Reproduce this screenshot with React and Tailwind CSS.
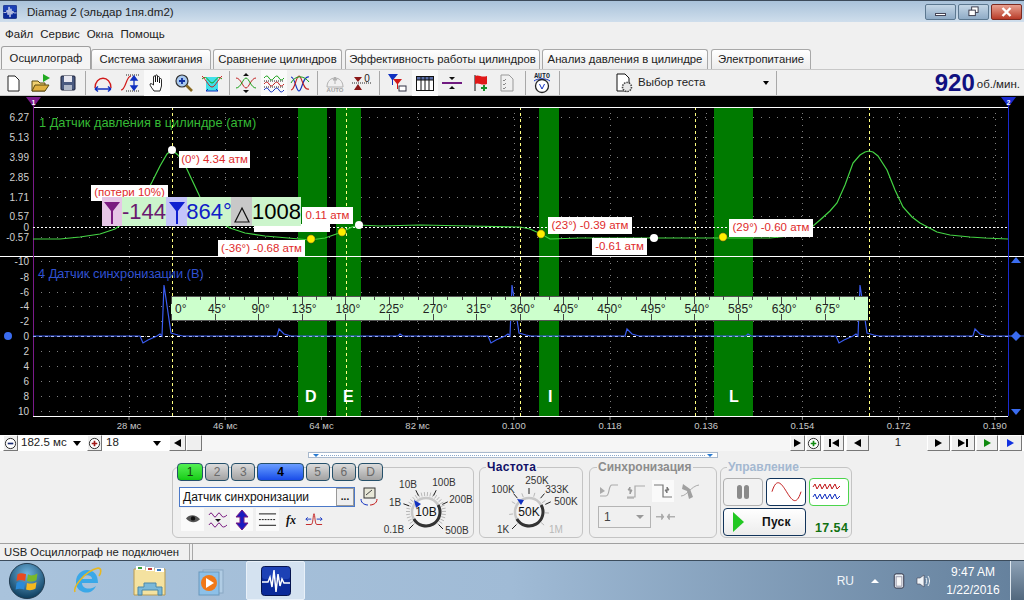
import React from "react";

const SANS = "font-['Liberation_Sans',Arial,sans-serif]";

// sync trace repeats every 348px
const syncPeriod = (o) =>
  `L${140 + o} 336 L${143 + o} 343 L${148 + o} 340 L${157 + o} 336 L${160 + o} 334 L${162 + o} 336 L${164 + o} 285 L${171 + o} 333 L${178 + o} 335 L${183 + o} 336 L${277 + o} 336 L${279 + o} 329 L${284 + o} 334 L${291 + o} 336 L${398 + o} 336 L${400 + o} 334 L${403 + o} 336 `;

const syncPath = "M33 336 " + syncPeriod(0) + syncPeriod(348) + syncPeriod(696) + "L1008 336";

const pressurePoints =
  "33,239 60,239 80,237 100,234 115,229 125,222 135,212 145,195 152,182 160,166 167,154 172,150 178,155 185,165 192,180 200,197 208,210 218,221 230,228 245,233 265,236 288,238 310,240 325,238 342,232 352,227 359,225 380,226 420,225 470,226 520,227 530,229 541,234 550,239 580,238 654,238 723,238 770,238 790,236 800,233 813,226 820,220 830,211 837,203 845,185 853,163 860,155 865,152 869,151 873,152 878,156 887,170 895,190 903,207 912,217 920,223 937,232 950,235 970,237 985,238 1008,239";

const topTicks = [
  ["6.27", 117], ["5.13", 137], ["3.99", 157], ["2.85", 177], ["1.71", 197],
  ["0.57", 216.5], ["0", 227], ["-0.57", 237],
];
const bottomTicks = [
  ["-10", 261], ["-8", 277], ["-6", 292], ["-4", 306], ["-2", 321], ["0", 336],
  ["2", 351], ["4", 366], ["6", 381], ["8", 396], ["10", 411],
];
const timeTicks = ["28 мс", "46 мс", "64 мс", "82 мс", "0.100", "0.118", "0.136", "0.154", "0.172", "0.190"];
const degrees = [45, 90, 135, 180, 225, 270, 315, 360, 405, 450, 495, 540, 585, 630, 675];

function WaveLogo({ className }) {
  return (
    <svg viewBox="0 0 30 30" className={className}>
      <rect x="0.5" y="0.5" width="29" height="29" rx="3" fill="#0b2a9a" stroke="#06144f" />
      <rect x="1" y="1" width="28" height="12" rx="3" fill="#2a52c8" opacity="0.6" />
      <path d="M1 16 H7 L9 11 L11 21 L13 4 L15 26 L17 8 L19 20 L21 13 L23 17 H29" fill="none" stroke="#fff" strokeWidth="1.5" />
    </svg>
  );
}

function PlotArea() {
  return (
    <div className="relative h-[339px] w-full shrink-0 overflow-hidden bg-black">
      <svg viewBox="0 96 1024 339" className="absolute inset-0 h-[339px] w-[1024px]">
        {topTicks.concat(bottomTicks).map(([t, y]) => (
          <line key={t + y} x1="33" x2="1008" y1={Math.floor(y) + 0.5} y2={Math.floor(y) + 0.5} stroke="#808080" strokeDasharray="1 7" />
        ))}
        {timeTicks.map((t, i) => (
          <line key={t} x1={Math.round(129 + i * 96.2) + 0.5} x2={Math.round(129 + i * 96.2) + 0.5} y1="107" y2="416" stroke="#808080" strokeDasharray="1 5" />
        ))}
        <rect x="298" y="107" width="29" height="309" fill="#007a00" />
        <rect x="336" y="107" width="25" height="309" fill="#007a00" />
        <rect x="539" y="107" width="20" height="309" fill="#007a00" />
        <rect x="714" y="107" width="39" height="309" fill="#007a00" />
        {[172.5, 346.5, 520.5, 695.5, 869.5].map((x) => (
          <line key={x} x1={x} x2={x} y1="107" y2="416" stroke="#ffff80" strokeDasharray="3 3" />
        ))}
        <line x1="33" x2="1008" y1="107.5" y2="107.5" stroke="#fff" />
        <line x1="0" x2="1024" y1="256.5" y2="256.5" stroke="#fff" />
        <line x1="33" x2="1008" y1="416.5" y2="416.5" stroke="#fff" />
        <line x1="33.5" x2="33.5" y1="100" y2="416" stroke="#7a1a8a" />
        <line x1="1008.5" x2="1008.5" y1="100" y2="416" stroke="#1a2ad0" />
        <line x1="33" x2="1008" y1="227.5" y2="227.5" stroke="#fff" strokeDasharray="2 2" />
        <polyline points={pressurePoints} fill="none" stroke="#44d444" strokeWidth="1.2" />
        <line x1="33" x2="1008" y1="336.5" y2="336.5" stroke="#fff" strokeDasharray="3 3" />
        <path d={syncPath} fill="none" stroke="#3a5cf0" strokeWidth="1.2" />
        <path d="M26 97 H41 L33.5 107 Z" fill="#7a1a8a" />
        <text x="33.5" y="105" fontSize="7" fontWeight="700" fill="#fff" textAnchor="middle" fontFamily="Liberation Sans">1</text>
        <path d="M1001 97 H1016 L1008.5 107 Z" fill="#1a2ad0" />
        <text x="1008.5" y="105" fontSize="7" fontWeight="700" fill="#fff" textAnchor="middle" fontFamily="Liberation Sans">2</text>
        <circle cx="8" cy="336" r="4" fill="#3a6cf0" />
        <path d="M1016 331 L1021 336 L1016 341 L1011 336 Z" fill="#3a6cf0" />
        <path d="M1011 263 L1016 257 L1021 263 Z" fill="#3a6cf0" />
        <path d="M1011 409 L1021 409 L1016 415 Z" fill="#3a6cf0" />
        {topTicks.concat(bottomTicks).map(([t, y]) => (
          <text key={t + y} x="29" y={y + 3.5} fontSize="10" fill="#d0d0d0" textAnchor="end" fontFamily="Liberation Sans">{t}</text>
        ))}
        {timeTicks.map((t, i) => (
          <g key={t}>
            <line x1={129 + i * 96.2} x2={129 + i * 96.2} y1="417" y2="420" stroke="#999" />
            <text x={129 + i * 96.2} y="429" fontSize="9.5" fill="#c8c8c8" textAnchor="middle" fontFamily="Liberation Sans">{t}</text>
          </g>
        ))}
        <circle cx="172" cy="150" r="4" fill="#fff" />
        <circle cx="359" cy="225" r="4" fill="#fff" />
        <circle cx="654" cy="238" r="4" fill="#fff" />
        <circle cx="311" cy="239" r="4.2" fill="#ffee00" stroke="#222" strokeWidth="0.5" />
        <circle cx="342" cy="232" r="4.2" fill="#ffee00" stroke="#222" strokeWidth="0.5" />
        <circle cx="541" cy="234" r="4.2" fill="#ffee00" stroke="#222" strokeWidth="0.5" />
        <circle cx="723" cy="237" r="4.2" fill="#ffee00" stroke="#222" strokeWidth="0.5" />
      </svg>

      <span className="absolute left-[39px] top-[21px] text-[12.8px] leading-none text-[#35bb35]">1 Датчик давления в цилиндре (атм)</span>
      <span className="absolute left-[38px] top-[172px] text-[12.8px] leading-none text-[#2f50d0]">4 Датчик синхронизации (В)</span>

      {/* band letters */}
      <span className="absolute left-[305px] top-[293px] text-[16px] font-bold leading-none text-white">D</span>
      <span className="absolute left-[343px] top-[293px] text-[16px] font-bold leading-none text-white">E</span>
      <span className="absolute left-[548px] top-[293px] text-[16px] font-bold leading-none text-white">I</span>
      <span className="absolute left-[729px] top-[293px] text-[16px] font-bold leading-none text-white">L</span>

      {/* red value labels */}
      <span className="absolute left-[254px] top-[128px] h-[8px] w-[76px] bg-white" />
      <span className="absolute left-[179px] top-[55px] flex h-[17px] w-[71px] items-center justify-center bg-white text-[11.5px] text-[#e02a2a]">(0°) 4.34 атм</span>
      <span className="absolute left-[91px] top-[89px] flex h-[16px] w-[77px] items-center justify-center bg-white text-[11.5px] text-[#e02a2a]">(потери 10%)</span>
      <span className="absolute left-[302px] top-[111px] flex h-[17px] w-[51px] items-center justify-center bg-white text-[11.5px] text-[#e02a2a]">0.11 атм</span>
      <span className="absolute left-[218px] top-[144px] flex h-[17px] w-[87px] items-center justify-center whitespace-nowrap bg-white text-[11.5px] text-[#e02a2a]">(-36°) -0.68 атм</span>
      <span className="absolute left-[548px] top-[121px] flex h-[17px] w-[84px] items-center justify-center whitespace-nowrap bg-white text-[11.5px] text-[#e02a2a]">(23°) -0.39 атм</span>
      <span className="absolute left-[592px] top-[142px] flex h-[17px] w-[55px] items-center justify-center whitespace-nowrap bg-white text-[11.5px] text-[#e02a2a]">-0.61 атм</span>
      <span className="absolute left-[729px] top-[123px] flex h-[18px] w-[84px] items-center justify-center whitespace-nowrap bg-white text-[11.5px] text-[#e02a2a]">(29°) -0.60 атм</span>

      {/* cursor readout */}
      <div className="absolute left-[102px] top-[101px] flex h-[29px] items-stretch text-[22px] leading-none">
        <span className="flex w-[20px] items-center justify-center bg-[#e6c6e6]">
          <svg viewBox="0 0 20 29" className="h-[29px] w-[20px]"><path d="M2 5 H18 L11 14 V27 H9 V14 Z" fill="#7a1a80" /></svg>
        </span>
        <span className="flex w-[44px] items-center justify-center bg-[#ccf5cc] text-[#6a1a70]">-144</span>
        <span className="flex w-[21px] items-center justify-center bg-[#c4c4fa]">
          <svg viewBox="0 0 20 29" className="h-[29px] w-[20px]"><path d="M2 5 H18 L11 14 V27 H9 V14 Z" fill="#1020d0" /></svg>
        </span>
        <span className="flex w-[44px] items-center justify-center bg-[#ccf5cc] text-[#1020c8]">864°</span>
        <span className="flex w-[21px] items-center justify-center bg-[#c8c8c8]">
          <svg viewBox="0 0 20 29" className="h-[29px] w-[20px]"><path d="M10 11 L17 25 H3 Z" fill="none" stroke="#111" strokeWidth="1.2" /></svg>
        </span>
        <span className="flex w-[49px] items-center justify-center bg-[#ccf5cc] text-black">1008</span>
      </div>

      {/* degree ruler */}
      <div className="absolute left-[171px] top-[200px] h-[25px] w-[697px] overflow-hidden bg-[#ccffcc]">
        <svg viewBox="0 0 697 25" className="absolute inset-0 h-[25px] w-[697px]">
          <path d="M0 0.5 H697 M0 24.5 H697" stroke="#555" />
          {Array.from({ length: 49 }, (_, i) => (
            <line key={i} x1={Math.round(i * 14.53) + 0.5} x2={Math.round(i * 14.53) + 0.5} y1="0" y2={i % 3 === 0 ? 8 : 4} stroke="#444" />
          ))}
          {Array.from({ length: 16 }, (_, i) => (
            <line key={i} x1={Math.round(i * 43.6) + 0.5} x2={Math.round(i * 43.6) + 0.5} y1="18" y2="25" stroke="#444" />
          ))}
        </svg>
        <div className="relative flex h-[25px] items-center text-[12px] text-[#222]">
          <span className="w-[24.2px] shrink-0 pl-[4px]">0°</span>
          {degrees.map((d) => (
            <span key={d} className="w-[43.64px] shrink-0 text-center">{d}°</span>
          ))}
        </div>
      </div>
    </div>
  );
}

function Tool({ className = "", pressed, children }) {
  return (
    <div className={`flex h-[26px] w-[26px] shrink-0 items-center justify-center ${pressed ? "bg-[#fafafa]" : ""} ${className}`}>
      {children}
    </div>
  );
}

const Sep = ({ className = "" }) => <div className={`h-[24px] w-px shrink-0 bg-[#a8a8a8] ${className}`} />;

function Toolbar() {
  return (
    <div className="flex h-[27px] shrink-0 items-center border-y border-[#c8c8c8] bg-[#f0f0f0]">
      <Tool>
        <svg viewBox="0 0 20 20" className="h-5 w-5"><path d="M5 3 H12 L16 7 V18 H5 Z" fill="#fff" stroke="#222" /></svg>
      </Tool>
      <Tool className="ml-[2px]">
        <svg viewBox="0 0 20 20" className="h-5 w-5"><path d="M1 18 V8 H7 L9 10 H14 V18 Z" fill="#f0cf70" stroke="#5a4a10" /><path d="M1 18 L4 12 H18 L14 18 Z" fill="#e0b040" stroke="#5a4a10" /><path d="M12 1 L19 5 L12 9 Z" fill="#22aa22" /></svg>
      </Tool>
      <Tool className="ml-[1px]">
        <svg viewBox="0 0 20 20" className="h-5 w-5"><rect x="3" y="3" width="14" height="14" rx="1" fill="#4a5a80" stroke="#1a2038" /><rect x="6" y="3" width="8" height="6" fill="#e8e8f0" /><rect x="6" y="12" width="8" height="5" fill="#b0b8c8" /></svg>
      </Tool>
      <Sep className="ml-[4px]" />
      <Tool className="ml-[4px]">
        <svg viewBox="0 0 20 20" className="h-5 w-5"><path d="M2 15 C2 2 18 2 18 15" fill="none" stroke="#d01818" strokeWidth="1.3" /><path d="M2 16 H18 M2 16 L5 13.5 M2 16 L5 18.5 M18 16 L15 13.5 M18 16 L15 18.5" stroke="#1030c0" strokeWidth="1.5" fill="none" /></svg>
      </Tool>
      <Tool className="ml-[1px]">
        <svg viewBox="0 0 20 20" className="h-5 w-5"><path d="M1 17 C6 17 6 3 11 3" fill="none" stroke="#d01818" strokeWidth="1.2" /><path d="M6 2 H19 M6 18 H19" stroke="#222" strokeDasharray="1 1" /><path d="M14 3 V17 M14 3 L11 7 H17 Z M14 17 L11 13 H17 Z" fill="#1030c0" stroke="#1030c0" strokeWidth="1.3" /></svg>
      </Tool>
      <Tool className="ml-[1px]" pressed>
        <svg viewBox="0 0 20 20" className="h-5 w-5"><path d="M7 18 C5 15 3 13 3 11 C4 10 5 11 6.5 12 V4 C6.5 2.5 8.5 2.5 8.5 4 V9 V3 C8.5 1.5 10.5 1.5 10.5 3 V9 V4.5 C10.5 3.2 12.5 3.2 12.5 4.5 V10 V6.5 C12.5 5.2 14.5 5.2 14.5 6.5 V13 L13 18 Z" fill="#fff" stroke="#111" strokeWidth="0.9" /></svg>
      </Tool>
      <Tool className="ml-[1px]">
        <svg viewBox="0 0 20 20" className="h-5 w-5"><circle cx="8" cy="8" r="6" fill="#a8c8ee" stroke="#333" strokeWidth="1.2" /><path d="M5 8 H11 M8 5 V11" stroke="#1030a0" strokeWidth="1.8" /><path d="M12.5 12.5 L18 18" stroke="#8a6a20" strokeWidth="2.6" /></svg>
      </Tool>
      <Tool className="ml-[2px]">
        <svg viewBox="0 0 20 20" className="h-5 w-5"><rect x="4" y="4" width="12" height="14" fill="#40e0e8" /><path d="M0 6 C5 1 7 10 10 10 C13 10 15 1 20 6" fill="none" stroke="#18a018" /><path d="M0 3 C5 8 7 14 10 14 C13 14 15 8 20 3" fill="none" stroke="#c82020" /><path d="M4 18 H16 M4 18 L6 16 M16 18 L14 16" stroke="#1030c0" fill="none" /></svg>
      </Tool>
      <Sep className="ml-[4px]" />
      <Tool className="ml-[3px]">
        <svg viewBox="0 0 20 20" className="h-5 w-5"><path d="M0 5 C5 5 7 15 10 15 C13 15 15 5 20 5" fill="none" stroke="#c02020" /><path d="M0 15 C5 15 7 5 10 5 C13 5 15 15 20 15" fill="none" stroke="#18a018" /><path d="M10 0 L7 3 H13 Z M10 20 L7 17 H13 Z" fill="#111" /></svg>
      </Tool>
      <Tool className="ml-[2px]" pressed>
        <svg viewBox="0 0 20 20" className="h-5 w-5"><path d="M0 5 Q3 1 5 5 T10 5 T15 5 T20 5" fill="none" stroke="#18a018" /><path d="M0 11 Q3 7 5 11 T10 11 T15 11 T20 11" fill="none" stroke="#c02020" /><path d="M0 17 Q3 13 5 17 T10 17 T15 17 T20 17" fill="none" stroke="#1030c0" /><path d="M0 8 H20 M0 14 H20" stroke="#222" strokeDasharray="1 1" /></svg>
      </Tool>
      <Tool>
        <svg viewBox="0 0 20 20" className="h-5 w-5"><path d="M1 4 C5 4 6 18 9 18 C12 18 13 2 19 4" fill="none" stroke="#1030c0" strokeWidth="1.1" /><path d="M1 17 C5 17 6 3 9 3 C12 3 13 18 19 16" fill="none" stroke="#c02020" strokeWidth="1.1" /><path d="M1 10 C5 2 14 2 19 9" fill="none" stroke="#18a018" /></svg>
      </Tool>
      <Sep className="ml-[4px]" />
      <Tool className="ml-[4px]">
        <svg viewBox="0 0 20 20" className="h-5 w-5"><path d="M2 14 C2 2 18 2 18 14 Z" fill="none" stroke="#b0b0b0" /><path d="M10 4 V11 M10 4 L8 7 H12 Z" stroke="#b0b0b0" fill="#b0b0b0" /><text x="10" y="19" fontSize="6" fontWeight="700" fill="#a0a0a0" textAnchor="middle" fontFamily="Liberation Sans">AUTO</text></svg>
      </Tool>
      <Tool className="ml-[1px]">
        <svg viewBox="0 0 22 20" className="h-5 w-[22px]"><path d="M1 10 H21" stroke="#222" strokeDasharray="1 1" /><path d="M3 4 H11 L7 9 Z M3 17 H11 L7 11 Z" fill="#8a1818" /><text x="16" y="9" fontSize="10" fill="#222" textAnchor="middle" fontFamily="Liberation Sans">0</text></svg>
      </Tool>
      <Sep className="ml-[4px]" />
      <Tool className="ml-[4px]">
        <svg viewBox="0 0 20 20" className="h-5 w-5"><path d="M1 1 H11 L6 7 V12 L5 12 V7 Z" fill="#1030c0" /><path d="M6 6 H15 L11 11 V16 H10 V11 Z" fill="#d01818" /><rect x="12" y="13" width="7" height="5" fill="#fff" stroke="#334" /></svg>
      </Tool>
      <Tool className="ml-[2px]" pressed>
        <svg viewBox="0 0 20 20" className="h-5 w-5"><rect x="1.5" y="3.5" width="17" height="14" fill="#fff" stroke="#111" /><rect x="1.5" y="3.5" width="17" height="3.5" fill="#5a6ea8" stroke="#111" /><path d="M6 3 V18 M10 3 V18 M14 3 V18" stroke="#111" /></svg>
      </Tool>
      <Tool className="ml-[1px]">
        <svg viewBox="0 0 20 20" className="h-5 w-5"><path d="M0 10 H20" stroke="#701a80" strokeWidth="2" /><path d="M10 7 L7 4 H13 Z M10 13 L7 16 H13 Z" fill="#111" /></svg>
      </Tool>
      <Tool className="ml-[3px]">
        <svg viewBox="0 0 20 20" className="h-5 w-5"><path d="M4 2 V18" stroke="#111" /><path d="M4 3 C8 1 10 5 16 3 V11 C10 13 8 9 4 11 Z" fill="#e01818" /><path d="M10 15 H16 M13 12 V18" stroke="#18902a" strokeWidth="2" /></svg>
      </Tool>
      <Tool>
        <svg viewBox="0 0 20 20" className="h-5 w-5"><path d="M4 2 H12 L16 6 V18 H4 Z" fill="#f0f0f0" stroke="#999" /><path d="M6 7 L7 8 L9 6 M6 11 L7 12 L9 10 M6 15 L7 16 L9 14" fill="none" stroke="#888" /></svg>
      </Tool>
      <Sep className="ml-[5px]" />
      <Tool className="ml-[3px]">
        <svg viewBox="0 0 20 22" className="h-[22px] w-5"><text x="10" y="6" fontSize="6.5" fontWeight="700" fill="#123" textAnchor="middle" fontFamily="Liberation Mono">AUTO</text><path d="M2 9 C6 6 14 6 18 9" fill="none" stroke="#1030c0" /><circle cx="10" cy="14" r="6.5" fill="#fff" stroke="#222" strokeWidth="1.3" /><path d="M7.5 12 L10 17 L12.5 12" fill="none" stroke="#1030c0" /></svg>
      </Tool>
      <Sep className="ml-[4px]" />
      <div className="ml-[54px] flex w-[155px] shrink-0 items-center">
        <svg viewBox="0 0 20 20" className="h-5 w-5 shrink-0"><path d="M3 1 H11 L15 5 V18 H3 Z" fill="#fff" stroke="#111" /><circle cx="13" cy="14" r="4.5" fill="#e8e8e8" stroke="#444" strokeDasharray="1.5 1" strokeWidth="1.6" /></svg>
        <span className="ml-[4px] text-[11.5px] text-[#222]">Выбор теста</span>
        <span className="ml-auto border-x-[3.5px] border-t-[4px] border-x-transparent border-t-black" />
      </div>
      <Sep className="ml-[7px]" />
      <span className="ml-auto text-[24px] font-bold leading-none text-[#101080]">920</span>
      <span className="ml-[2px] mr-[4px] pt-[5px] text-[11.5px] text-[#222]">об./мин.</span>
    </div>
  );
}

function NavBtn({ className = "", children }) {
  return (
    <div className={`flex h-[16px] shrink-0 items-center justify-center border border-[#777] border-t-white border-l-white bg-[#efefef] ${className}`}>
      {children}
    </div>
  );
}

const TriR = ({ c = "border-l-black" }) => <span className={`border-y-[4px] border-l-[7px] border-y-transparent ${c}`} />;
const TriL = () => <span className="border-y-[4px] border-r-[7px] border-y-transparent border-r-black" />;
const Caret = () => <span className="border-x-[4px] border-t-[5px] border-x-transparent border-t-black" />;

function RoundBtn({ plus }) {
  return (
    <NavBtn className="w-[15px]">
      <svg viewBox="0 0 14 14" className="h-[13px] w-[13px]">
        <circle cx="7" cy="7" r="5.5" fill="#fff" stroke="#222" />
        <path d={plus ? "M4 7 H10 M7 4 V10" : "M4 7 H10"} stroke={plus === "green" ? "#108a10" : plus ? "#a01818" : "#1a2a70"} strokeWidth="1.8" />
      </svg>
    </NavBtn>
  );
}

function ScaleRow() {
  return (
    <div className="flex h-[16px] shrink-0 items-center bg-white text-[11.5px] text-[#222]">
      <div className="ml-[3px]"><RoundBtn /></div>
      <span className="ml-[3px] w-[52px] shrink-0 whitespace-nowrap">182.5 мс</span>
      <Caret />
      <div className="ml-[6px]"><RoundBtn plus /></div>
      <span className="ml-[4px] w-[47px] shrink-0">18</span>
      <Caret />
      <NavBtn className="ml-[8px] w-[17px]"><TriL /></NavBtn>
      <NavBtn className="w-[16px]" />
      <div className="h-full flex-1 bg-[#f6f6f6]" />
      <NavBtn className="w-[15px]"><TriR /></NavBtn>
      <div className="ml-[1px]"><RoundBtn plus="green" /></div>
      <NavBtn className="ml-[2px] w-[21px]"><span className="mr-px h-[8px] w-[2px] bg-black" /><TriL /></NavBtn>
      <NavBtn className="ml-[2px] w-[23px]"><TriL /></NavBtn>
      <span className="flex h-full w-[58px] shrink-0 items-center justify-center bg-[#f0f0f0]">1</span>
      <NavBtn className="w-[23px]"><TriR /></NavBtn>
      <NavBtn className="ml-px w-[24px]"><TriR /><span className="ml-px h-[8px] w-[2px] bg-black" /></NavBtn>
      <NavBtn className="ml-px w-[22px]"><TriR c="border-l-[#108a10]" /></NavBtn>
      <NavBtn className="ml-px mr-[2px] w-[23px]"><TriR c="border-l-[#1030e0]" /></NavBtn>
    </div>
  );
}

function Knob({ cx, pointer, children, width, marks, count, step }) {
  const cy = 44;
  const polar = (deg, r) => [cx + r * Math.cos((deg * Math.PI) / 180), cy + r * Math.sin((deg * Math.PI) / 180)];
  const ticks = Array.from({ length: count }, (_, i) => {
    const [x1, y1] = polar(135 + i * step, 16);
    const [x2, y2] = polar(135 + i * step, 20);
    return <line key={i} x1={x1} y1={y1} x2={x2} y2={y2} stroke="#b8b8b8" />;
  });
  const [ax, ay] = polar(-30, 14);
  const [bx, by] = polar(150, 14);
  return (
    <svg viewBox={`0 0 ${width} 69`} className="h-[69px] shrink-0" width={width}>
      {ticks}
      {marks.map((deg) => {
        const [x1, y1] = polar(deg, 18);
        const [x2, y2] = polar(deg, 24);
        return <line key={deg} x1={x1} y1={y1} x2={x2} y2={y2} stroke="#222" />;
      })}
      <circle cx={cx} cy={cy} r="14" fill="#f4f4f4" stroke="#c8c8c8" strokeWidth="2.5" />
      <path d={`M${ax} ${ay} A14 14 0 0 1 ${bx} ${by}`} fill="none" stroke="#333" strokeWidth="3" />
      <path d={pointer} fill="#1030c0" />
      {children}
    </svg>
  );
}

const knobText = { fontSize: 10, fontFamily: "Liberation Sans", fill: "#333", textAnchor: "middle" };

function ChannelButtons() {
  const off = "h-[18px] flex items-center justify-center rounded-sm border border-[#25506a] bg-gradient-to-b from-[#dcdcdc] to-[#a2a2a2] text-[12px] text-[#6a6a6a]";
  return (
    <div className="-mt-[5px] ml-[4px] flex gap-[2px]">
      <div className="flex h-[18px] w-[27px] items-center justify-center rounded-sm border border-[#25506a] bg-gradient-to-b from-[#52f052] to-[#10cc10] text-[12px] text-[#104010]">1</div>
      <div className={`w-[25px] ${off}`}>2</div>
      <div className={`w-[25px] ${off}`}>3</div>
      <div className="flex h-[18px] w-[48px] items-center justify-center rounded-sm border border-[#25506a] bg-gradient-to-b from-[#6a9cff] to-[#1a4ae8] text-[12px] font-bold text-black">4</div>
      <div className={`w-[25px] ${off}`}>5</div>
      <div className={`w-[25px] ${off}`}>6</div>
      <div className={`w-[26px] ${off}`}>D</div>
    </div>
  );
}

function ChannelPanel() {
  return (
    <div className="flex h-[71px] w-[302px] shrink-0 rounded-md border border-[#c4c4c4]">
      <div className="w-[210px] shrink-0">
        <ChannelButtons />
        <div className="ml-[6px] mt-[6px] flex items-center">
          <div className="flex h-[20px] w-[176px] items-center whitespace-nowrap border border-[#4a78c8] bg-white pl-[3px] text-[12px] text-[#111]">
            Датчик синхронизации
            <span className="ml-auto flex h-[18px] w-[18px] items-center justify-center border border-[#999] bg-[#eee] text-[10px] font-bold leading-none">...</span>
          </div>
          <svg viewBox="0 0 20 20" className="ml-[4px] h-5 w-5">
            <rect x="5" y="1" width="11" height="10" fill="#e8e8d8" stroke="#333" /><path d="M7 8 L13 3" stroke="#444" />
            <path d="M2 12 C2 17 7 18 9 18" fill="none" stroke="#1030c0" /><path d="M18 12 C18 17 13 18 11 18" fill="none" stroke="#c01818" />
          </svg>
        </div>
        <div className="ml-[8px] mt-px flex items-center">
          <div className="flex h-[23px] w-[23px] items-center justify-center bg-[#fafafa]">
            <svg viewBox="0 0 16 12" className="w-[14px]"><path d="M0 5 C4 0 11 0 16 6 C11 11 4 10 0 5 Z" fill="#555" /><circle cx="8" cy="5" r="2.5" fill="#111" /></svg>
          </div>
          <svg viewBox="0 0 20 20" className="ml-[4px] h-5 w-5"><path d="M1 5 Q3 1 5 5 T9 5 T13 5 T19 5 M1 15 Q3 11 5 15 T9 15 T13 15 T19 15" fill="none" stroke="#7a1a80" /><path d="M7 9 H13 L10 12 Z" fill="#111" /></svg>
          <div className="ml-[2px] flex h-[23px] w-[23px] items-center justify-center bg-[#fafafa]">
            <svg viewBox="0 0 16 20" className="h-5 w-4"><path d="M8 0 L14 7 H10 V13 H14 L8 20 L2 13 H6 V7 H2 Z" fill="#1a1ac0" stroke="#7a1a80" /></svg>
          </div>
          <div className="ml-[3px] flex h-[23px] w-[23px] items-center justify-center bg-[#fafafa]">
            <svg viewBox="0 0 20 16" className="w-[19px]"><path d="M1 2 H19 M1 14 H19" stroke="#111" /><path d="M1 8 H19" stroke="#111" strokeDasharray="2 1" /></svg>
          </div>
          <span className="ml-[7px] font-['Liberation_Serif',serif] text-[12px] font-bold italic text-[#111]">fx</span>
          <svg viewBox="0 0 20 20" className="ml-[9px] h-[18px] w-[18px]"><path d="M1 15 H7 C9 15 9 3 10 3 C11 3 11 15 13 15 H19" fill="none" stroke="#c01818" /><path d="M1 9 H7 M1 9 L3 7 M1 9 L3 11 M19 9 H13 M19 9 L17 7 M19 9 L17 11" fill="none" stroke="#1030c0" /></svg>
        </div>
      </div>
      <Knob cx={43} width={90} count={30} step={9.3} marks={[-115, -65, -25, -160, 135, 45]} pointer="M31 32 L38 36 L33 40 Z">
        <text x="25" y="20" {...knobText}>10В</text>
        <text x="61" y="18" {...knobText}>100В</text>
        <text x="78" y="35" {...knobText}>200В</text>
        <text x="12" y="38" {...knobText}>1В</text>
        <text x="11" y="65" {...knobText}>0.1В</text>
        <text x="74" y="66" {...knobText}>500В</text>
        <text x="43" y="48" fontSize="12" fontFamily="Liberation Sans" fill="#111" textAnchor="middle">10В</text>
      </Knob>
    </div>
  );
}

function Title({ className, children }) {
  return (
    <span className={`absolute -top-[7px] bg-[#f0f0f0] px-px text-[12px] font-bold leading-none ${className}`}>{children}</span>
  );
}

function SyncPanel() {
  const ic = "h-[22px] w-[22px]";
  return (
    <div className="relative ml-[6px] h-[71px] w-[128px] shrink-0 rounded-md border border-[#c4c4c4]">
      <Title className="left-[7px] text-[#8c8c8c]">Синхронизация</Title>
      <div className="ml-[8px] mt-[12px] flex items-center gap-[5px]">
        <svg viewBox="0 0 22 20" className={ic}><path d="M2 15 H8 C12 15 10 4 14 4 H20" fill="none" stroke="#aaa" strokeWidth="1.2" /><path d="M2 6 L7 10 L2 13 Z" fill="#aaa" /></svg>
        <svg viewBox="0 0 22 20" className={ic}><path d="M2 16 H10 V5 H20" fill="none" stroke="#aaa" strokeWidth="1.2" /><path d="M5 13 V6 L3 9 H7 Z M2 17 H9" stroke="#999" fill="#999" /></svg>
        <svg viewBox="0 0 22 20" className="h-[22px] w-[22px] bg-[#fafafa]"><path d="M2 4 H11 V16 H20" fill="none" stroke="#777" strokeWidth="1.2" /><path d="M15 6 V12 L13 9 H17 Z" stroke="#777" fill="#777" /></svg>
        <svg viewBox="0 0 22 20" className={ic}><path d="M2 15 C8 15 12 5 20 4" fill="none" stroke="#aaa" /><path d="M4 3 L11 8 L14 16 L10 18 L8 10 L3 8 Z" fill="#a0a0a0" /></svg>
      </div>
      <div className="ml-[8px] mt-[4px] flex items-center">
        <div className="flex h-[22px] w-[53px] items-center border border-[#b4b4b4] bg-[#f0f0f0] pl-[5px] text-[12px] text-[#444]">
          1
          <span className="ml-auto mr-[6px] border-x-[4px] border-t-[4px] border-x-transparent border-t-[#999]" />
        </div>
        <svg viewBox="0 0 20 10" className="ml-[5px] w-[19px]"><path d="M0 5 H8 L6 2 V8 L8 5 Z M20 5 H12 L14 2 V8 L12 5 Z" fill="#aaa" stroke="#aaa" /></svg>
      </div>
    </div>
  );
}

function FreqPanel() {
  return (
    <div className="relative ml-[5px] h-[71px] w-[104px] shrink-0 rounded-md border border-[#c4c4c4]">
      <Title className="left-[6px] tracking-[0.3px] text-[#101068]">Частота</Title>
      <Knob cx={49} width={102} count={8} step={38} marks={[-130, -90, -50, -25, 135]} pointer="M37 31 L44 32 L41 37 Z">
        <text x="57" y="16" {...knobText}>250K</text>
        <text x="23" y="25" {...knobText}>100K</text>
        <text x="77" y="25" {...knobText}>333K</text>
        <text x="86" y="37" {...knobText}>500K</text>
        <text x="23" y="65" {...knobText}>1K</text>
        <text x="76" y="65" {...knobText} fill="#b8b8b8">1M</text>
        <text x="49" y="48" fontSize="12" fontFamily="Liberation Sans" fill="#111" textAnchor="middle">50K</text>
      </Knob>
    </div>
  );
}

function ControlPanel() {
  return (
    <div className="relative ml-[3px] h-[71px] w-[132px] shrink-0 rounded-md border border-[#c4c4c4]">
      <Title className="left-[6px] text-[#a4b8d0]">Управление</Title>
      <div className="ml-[2px] mt-[10px] flex gap-[3px]">
        <div className="flex h-[28px] w-[40px] items-center justify-center gap-[2px] rounded-sm border border-[#b0b0b0] bg-[#f2f2f2]">
          <span className="h-[14px] w-[5px] rounded-sm bg-[#8a8a8a]" /><span className="h-[14px] w-[5px] rounded-sm bg-[#8a8a8a]" />
        </div>
        <div className="flex h-[28px] w-[40px] items-center justify-center rounded-sm border border-[#12345a] bg-white">
          <svg viewBox="0 0 32 20" className="w-[31px]"><path d="M1 10 C6 -6 11 2 16 10 C21 18 26 26 31 10" fill="none" stroke="#c01818" /></svg>
        </div>
        <div className="flex h-[28px] w-[40px] items-center justify-center rounded-sm border border-[#4cd44c] bg-white">
          <svg viewBox="0 0 34 22" className="w-[34px]"><path d="M1 6 L3 3 L5 8 L8 3 L10 8 L13 3 L15 8 L18 3 L20 8 L23 3 L25 8 L28 5" fill="none" stroke="#c01818" /><path d="M1 16 L3 13 L5 18 L8 13 L10 18 L13 13 L15 18 L18 13 L20 18 L23 13 L25 18 L28 15" fill="none" stroke="#1030c0" /></svg>
        </div>
      </div>
      <div className="ml-[2px] mt-[2px] flex items-center">
        <div className="flex h-[28px] w-[83px] items-center rounded-sm border border-[#12345a] bg-gradient-to-b from-white to-[#ececec]">
          <span className="ml-[9px] border-y-[10px] border-l-[11px] border-y-transparent border-l-[#22c822]" />
          <span className="ml-[18px] text-[12px] font-bold leading-none tracking-[0.3px] text-[#111]">Пуск</span>
        </div>
        <span className="ml-[9px] mt-[12px] text-[12.5px] font-bold leading-none tracking-[0.4px] text-[#107010]">17.54</span>
      </div>
    </div>
  );
}

function Taskbar() {
  return (
    <div className="flex h-[40px] shrink-0 items-center border-t border-[#3c4c5c] bg-gradient-to-r from-[#a9c3dc] via-[#a0bbd6] to-[#64809c]">
      <svg viewBox="0 0 40 40" className="ml-[8px] h-[38px] w-[38px] shrink-0">
        <defs>
          <radialGradient id="orb" cx="50%" cy="30%" r="70%"><stop offset="0" stopColor="#6fb4e0" /><stop offset="1" stopColor="#0c3c5c" /></radialGradient>
        </defs>
        <circle cx="20" cy="20" r="18.5" fill="url(#orb)" stroke="#20384c" />
        <path d="M10 13 C13 11 16 12 19 13 L18 20 C15 19 12 18 9 20 Z" fill="#e84a20" />
        <path d="M21 13 C24 15 27 14 31 12 L30 19 C27 21 23 21 20 20 Z" fill="#7ab82a" />
        <path d="M9 22 C12 20 15 21 18 22 L17 29 C14 28 11 28 8 29 Z" fill="#2a8ad8" />
        <path d="M20 22 C23 23 27 23 30 21 L29 28 C26 30 22 30 19 29 Z" fill="#f4b820" />
      </svg>
      <svg viewBox="0 0 32 32" className="ml-[25px] h-[32px] w-[32px] shrink-0">
        <path d="M5 17 C5 9 11 5 16 5 C23 5 27 10 27 18 H11 C11 23 18 26 25 21 C22 28 15 29 10 26 C6 24 5 20 5 17 Z M11 14 H21 C21 9 12 9 11 14 Z" fill="#3aa8e8" fillRule="evenodd" />
        <path d="M4 27 C2 22 14 6 27 3 C31 3 30 8 28 11" fill="none" stroke="#e8b820" strokeWidth="1.6" />
      </svg>
      <svg viewBox="0 0 34 32" className="ml-[30px] h-[32px] w-[34px] shrink-0">
        <path d="M1 4 H32 V30 H1 Z" fill="#f4e2a0" stroke="#b89a50" />
        <path d="M3 1 H12 V5 H3 Z" fill="#fff" /><rect x="5" y="2" width="4" height="2" fill="#3aa03a" />
        <path d="M13 2 H21 V6 H13 Z" fill="#fff" /><rect x="15" y="3" width="4" height="2" fill="#c03a3a" />
        <path d="M22 3 H31 V7 H22 Z" fill="#fff" /><rect x="24" y="4" width="4" height="2" fill="#3a7ac0" />
        <path d="M5 30 V22 H11 V18 H23 V22 H29 V30 H25 V25 H9 V30 Z" fill="#7ab8d8" stroke="#4a88a8" />
      </svg>
      <svg viewBox="0 0 30 28" className="ml-[31px] mt-[4px] h-[28px] w-[30px] shrink-0">
        <rect x="5" y="1" width="20" height="23" fill="#b0cce4" stroke="#8aa8c4" />
        <rect x="1" y="3" width="20" height="23" fill="#8cc0e8" stroke="#6a98bc" />
        <circle cx="11" cy="14" r="8" fill="#f07818" />
        <path d="M8 9 L16 14 L8 19 Z" fill="#fff" />
      </svg>
      <div className="ml-[18px] flex h-[39px] w-[59px] shrink-0 items-center justify-center rounded-[2px] border border-[#e8f0f8] bg-[#d4e2f0]">
        <WaveLogo className="h-[30px] w-[30px]" />
      </div>
      <span className="ml-auto text-[12px] text-[#f0f4f8]">RU</span>
      <span className="ml-[17px] border-x-[4px] border-b-[4px] border-x-transparent border-b-white" />
      <svg viewBox="0 0 12 18" className="ml-[14px] h-[17px] w-[12px] shrink-0"><rect x="1" y="2" width="10" height="15" rx="2" fill="#e8eef4" stroke="#334" /><rect x="3" y="5" width="6" height="10" fill="#f8f8f8" stroke="#99a" /></svg>
      <svg viewBox="0 0 16 16" className="ml-[11px] h-[16px] w-[16px] shrink-0"><path d="M1 5 H4 L8 2 V14 L4 11 H1 Z" fill="#f0f4f8" stroke="#445" strokeWidth="0.6" /><path d="M10 5 C11 7 11 9 10 11 M12 3 C14 6 14 10 12 13" fill="none" stroke="#f0f4f8" /></svg>
      <div className="ml-[10px] flex w-[62px] shrink-0 flex-col items-center text-[12px] leading-[18px] text-white">
        <span>9:47 AM</span>
        <span>1/22/2016</span>
      </div>
      <div className="ml-[6px] h-[39px] w-[14px] shrink-0 border-l border-[#dde6ee] bg-gradient-to-b from-[#8ea2b6] to-[#52687e]" />
    </div>
  );
}

export default function App() {
  const tabOff = "flex h-[20px] items-center justify-center whitespace-nowrap rounded-t-[3px] border border-b-0 border-[#a8a8a8] bg-gradient-to-b from-white to-[#ececec]";
  return (
    <div className={`flex h-[600px] w-[1024px] flex-col overflow-hidden bg-[#f0f0f0] ${SANS}`}>
      {/* title bar */}
      <div className="flex h-[22px] shrink-0 items-center border-t border-[#3c4a5a] bg-gradient-to-b from-[#a9c2da] to-[#cfdeec]">
        <WaveLogo className="ml-[3px] h-[14px] w-[14px]" />
        <span className="ml-[10px] text-[11.6px] text-[#222]">Diamag 2 (эльдар 1пя.dm2)</span>
        <div className="ml-auto mr-[2px] flex gap-[2px]">
          <div className="flex h-[16px] w-[31px] items-end justify-center rounded-[2px] border border-[#5c7890] bg-gradient-to-b from-[#c4d6e6] to-[#8fabc6] pb-[3px]">
            <span className="h-[3px] w-[11px] border border-[#445] bg-white" />
          </div>
          <div className="flex h-[16px] w-[31px] items-center justify-center rounded-[2px] border border-[#5c7890] bg-gradient-to-b from-[#c4d6e6] to-[#8fabc6]">
            <svg viewBox="0 0 12 12" className="h-[11px] w-[11px]"><rect x="4" y="1" width="7" height="6" fill="#fff" stroke="#334" /><rect x="1" y="4.5" width="7" height="6" fill="#fff" stroke="#334" /></svg>
          </div>
          <div className="flex h-[16px] w-[31px] items-center justify-center rounded-[2px] border border-[#7c2a20] bg-gradient-to-b from-[#e8a090] to-[#b83a28]">
            <svg viewBox="0 0 12 10" className="h-[10px] w-[13px]"><path d="M2 1 L10 9 M10 1 L2 9" stroke="#fff" strokeWidth="2.4" /></svg>
          </div>
        </div>
      </div>

      {/* menu */}
      <div className="flex h-[24px] shrink-0 items-center gap-[7px] pl-[5px] pt-[2px] text-[11.5px] text-[#222]">
        <span>Файл</span><span>Сервис</span><span>Окна</span><span>Помощь</span>
      </div>

      {/* tabs */}
      <div className="flex h-[23px] shrink-0 items-end text-[11.3px] text-[#222]">
        <div className="z-10 ml-[1px] flex h-[23px] w-[90px] items-center justify-center rounded-t-[3px] border border-b-0 border-[#a0a0a0] bg-[#f4f4f4]">Осциллограф</div>
        <div className={`w-[120px] ${tabOff}`}>Система зажигания</div>
        <div className={`ml-[2px] w-[129px] ${tabOff}`}>Сравнение цилиндров</div>
        <div className={`ml-[3px] w-[195px] ${tabOff}`}>Эффективность работы цилиндров</div>
        <div className={`ml-[2px] w-[166px] ${tabOff}`}>Анализ давления в цилиндре</div>
        <div className={`ml-[3px] w-[100px] ${tabOff}`}>Электропитание</div>
      </div>

      <Toolbar />
      <PlotArea />
      <ScaleRow />

      {/* lower controls */}
      <div className="flex flex-1 flex-col">
        <div className="ml-[308px] mt-[1px] flex h-[6px] w-[410px] items-center justify-between border border-[#a8b8cc] bg-white px-[4px]">
          <span className="border-x-[3px] border-t-[3px] border-x-transparent border-t-[#2a7ad0]" />
          <span className="mx-[2px] flex-1 border-t border-dotted border-[#8aa8cc]" />
          <span className="border-x-[3px] border-t-[3px] border-x-transparent border-t-[#2a7ad0]" />
        </div>
        <div className="ml-[172px] mt-[9px] flex">
          <ChannelPanel />
          <FreqPanel />
          <SyncPanel />
          <ControlPanel />
        </div>
      </div>

      {/* status bar */}
      <div className="flex h-[17px] shrink-0 items-center gap-[2px] border-t border-[#a0a0a0] bg-[#f0f0f0] text-[11.3px] text-[#222]">
        <div className="flex h-full w-[190px] items-center whitespace-nowrap border-r border-[#a8a8a8] pl-[4px]">USB Осциллограф не подключен</div>
        <div className="h-full flex-1 border-l border-[#a8a8a8]" />
      </div>

      <Taskbar />
    </div>
  );
}
